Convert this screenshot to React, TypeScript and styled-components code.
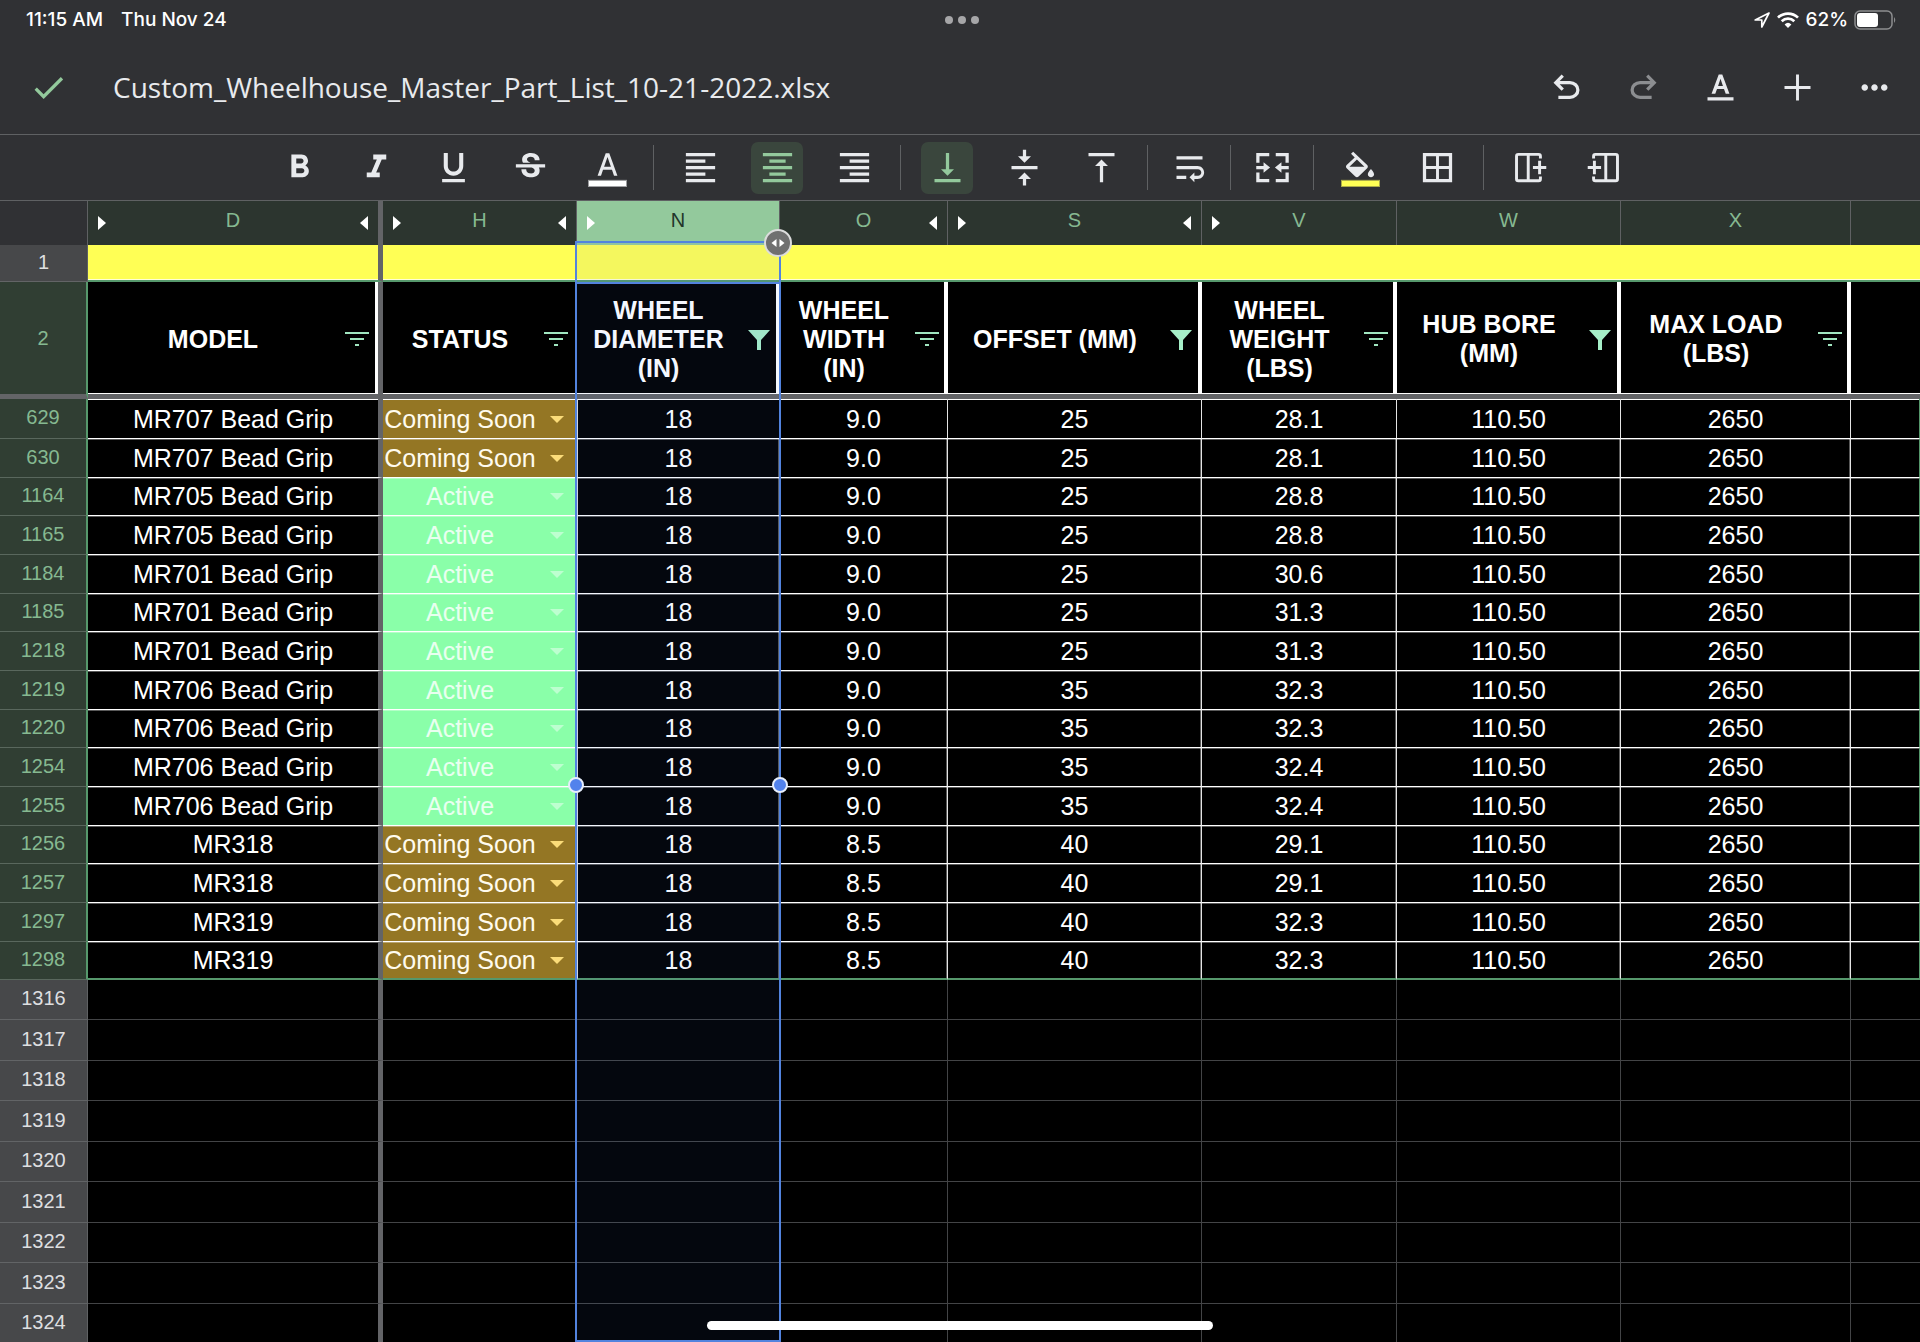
import React from 'react';
import styled, { createGlobalStyle, css } from 'styled-components';
import {
  MdCheck,
  MdFormatAlignCenter,
  MdFormatAlignLeft,
  MdFormatAlignRight,
  MdFormatBold,
  MdFormatItalic,
  MdFormatUnderlined,
  MdMoreHoriz,
  MdStrikethroughS,
  MdVerticalAlignBottom,
  MdVerticalAlignCenter,
  MdVerticalAlignTop,
  MdWrapText,
} from 'react-icons/md';

const color = {
  chrome: '#303134',
  chromeLine: '#5f6163',
  icon: '#e8eaed',
  accent: '#93c99c',
  accentBg: '#3a463d',
  headerBg: '#2c352f',
  labelBg: '#47484a',
  filteredBg: '#303e33',
  filteredText: '#86b991',
  range: '#56986c',
  freeze: '#636467',
  yellow: '#ffff55',
  selection: '#5283de',
  grid: '#434446',
};

const GlobalStyle = createGlobalStyle`
  *, *::before, *::after { box-sizing: border-box; }
  body { margin: 0; background: #000; }
  button, select { font: inherit; color: inherit; }
`;

const Page = styled.div`
  display: flex;
  flex-direction: column;
  height: 100vh;
  overflow: hidden;
  position: relative;
  background: #000;
  color: #fff;
  font-family: 'Liberation Sans', Arial, sans-serif;
`;

/* ---------- system status bar ---------- */

const StatusBar = styled.header`
  flex: none;
  display: grid;
  grid-template-columns: 1fr auto 1fr;
  align-items: center;
  height: 40px;
  padding: 0 22px 0 26px;
  background: ${color.chrome};
  font-family: Inter, sans-serif;
  font-size: 19px;
  line-height: 20px;
  font-weight: 500;
`;

const Clock = styled.div`
  display: flex;
  gap: 18px;
`;

const Multitask = styled.button`
  display: flex;
  gap: 5px;
  padding: 0;
  border: 0;
  background: none;
`;

const Dot = styled.span`
  width: 8px;
  height: 8px;
  border-radius: 50%;
  background: #a6a6a8;
`;

const Indicators = styled.div`
  display: flex;
  justify-content: flex-end;
  align-items: center;
  gap: 6px;
`;

/* ---------- title bar ---------- */

const TitleBar = styled.div`
  flex: none;
  display: flex;
  align-items: center;
  height: 94px;
  padding: 0 20px 0 22px;
  background: ${color.chrome};
`;

const FileName = styled.h1`
  flex: 1;
  margin: 0 0 0 39px;
  font-family: 'Open Sans', sans-serif;
  font-size: 28px;
  line-height: 36px;
  font-weight: 400;
  color: ${color.icon};
  white-space: nowrap;
`;

const Actions = styled.div`
  display: flex;
  gap: 25px;
`;

const IconButton = styled.button<{ $active?: boolean; $dim?: boolean; $accent?: boolean }>`
  display: grid;
  place-items: center;
  width: 52px;
  height: 52px;
  padding: 0;
  border: 0;
  border-radius: 7px;
  background: ${p => (p.$active ? color.accentBg : 'none')};
  color: ${p => (p.$active || p.$accent ? color.accent : color.icon)};
  opacity: ${p => (p.$dim ? 0.5 : 1)};
  svg {
    width: 39px;
    height: 39px;
  }
`;

/* ---------- formatting toolbar ---------- */

const Toolbar = styled.div`
  flex: none;
  display: flex;
  justify-content: center;
  align-items: center;
  gap: 20px;
  height: 67px;
  padding-right: 18px;
  background: ${color.chrome};
  border-top: 1px solid ${color.chromeLine};
  border-bottom: 1px solid ${color.chromeLine};
`;

const ToolGroup = styled.div<{ $tight?: boolean; $single?: boolean }>`
  display: flex;
  gap: ${p => (p.$tight ? 21 : 25)}px;
  margin: 0 ${p => (p.$single ? -5 : 0)}px;
`;

const Separator = styled.span`
  width: 1px;
  height: 45px;
  background: ${color.chromeLine};
`;

/* ---------- sheet ---------- */

const SheetArea = styled.main`
  flex: 1;
  min-height: 0;
  overflow: hidden;
  position: relative;
`;

const Sheet = styled.table`
  width: 100%;
  table-layout: fixed;
  border-collapse: separate;
  border-spacing: 0;
  font-size: 25px;
  line-height: 29px;
  text-align: center;

  th, td { padding: 0; }
`;

const Col = styled.col<{ $w?: number }>`
  width: ${p => (p.$w ? `${p.$w}px` : 'auto')};
`;

const freezeEdge = css`
  border-right: 5px solid ${color.freeze};
`;

const Corner = styled.td`
  height: 44px;
  background: ${color.chrome};
  border-right: 1px solid ${color.chromeLine};
`;

const ColumnHeader = styled.th<{ $selected?: boolean; $frozen?: boolean; $last?: boolean }>`
  background: ${p => (p.$selected ? color.accent : color.headerBg)};
  color: ${p => (p.$selected ? '#22352a' : color.filteredText)};
  border-right: ${p => (p.$last ? 0 : 1)}px solid ${color.chromeLine};
  font-size: 20px;
  line-height: 24px;
  font-weight: 400;
  ${p => p.$frozen && freezeEdge}
`;

const ColumnHeaderRow = styled.div`
  display: grid;
  grid-template-columns: 8px 1fr 8px;
  align-items: center;
  padding: 0 10px;
`;

const Letter = styled.span`
  grid-column: 2;
  padding-bottom: 6px;
`;

const HiddenToggle = styled.button<{ $side: 'left' | 'right' }>`
  grid-column: ${p => (p.$side === 'left' ? 1 : 3)};
  grid-row: 1;
  width: 8px;
  height: 14px;
  padding: 0;
  border: 0;
  background: #fff;
  clip-path: ${p =>
    p.$side === 'left'
      ? 'polygon(0 0, 100% 50%, 0 100%)'
      : 'polygon(100% 0, 0 50%, 100% 100%)'};
`;

const RowLabel = styled.th<{ $filtered?: boolean; $freezeBelow?: boolean }>`
  background: ${p => (p.$filtered ? color.filteredBg : color.labelBg)};
  color: ${p => (p.$filtered ? color.filteredText : '#dedfe0')};
  border-right: ${p =>
    p.$filtered ? `2px solid ${color.range}` : `1px solid ${color.chromeLine}`};
  border-bottom: 1px solid ${p => (p.$filtered ? '#59675d' : '#626466')};
  font-size: 20px;
  line-height: 24px;
  font-weight: 400;
  && {
    padding-bottom: 3px;
  }
  ${p => p.$freezeBelow && css`
    border-bottom: 5px solid ${color.freeze};
    && { padding-bottom: 0; }
  `}
`;

const BannerRow = styled.tr`
  height: 37px;
`;

const BannerCell = styled.td<{ $frozen?: boolean }>`
  background: ${color.yellow};
  border-bottom: 2px solid ${color.range};
  box-shadow: inset 0 -1px #ffffd6;
  ${p => p.$frozen && freezeEdge}
`;

const TitleRow = styled.tr`
  height: 117px;
`;

const TitleCell = styled.th<{ $frozen?: boolean; $edge: number }>`
  font-weight: 700;
  border-bottom: 5px solid ${color.freeze};
  box-shadow: inset 0 -1px #fff, inset -${p => p.$edge}px 0 #fff;
  && {
    padding-top: 2px;
  }
  ${p => p.$frozen && freezeEdge}
`;

const TitleContent = styled.div`
  display: flex;
  align-items: center;
`;

const TitleText = styled.span`
  flex: 1;
  padding-left: 2px;
  white-space: pre-line;
`;

const FilterButton = styled.button`
  flex: none;
  display: grid;
  place-items: center;
  width: 42px;
  height: 42px;
  padding: 0;
  border: 0;
  background: none;
`;

const FilteredBody = styled.tbody`
  tr { height: 39px; }
  tr:nth-child(3n) { height: 38px; }
  tr:first-child { height: 40px; }
  tr:first-child td { box-shadow: inset 0 1px #fff; padding-top: 1px; }
  tr:last-child td { border-bottom: 2px solid ${color.range}; }
`;

/* Cell rules are one solid pixel with a fainter one beside it. */
const softTop = 'inset 0 1px rgba(255, 255, 255, 0.35)';
const softRight = 'inset -1px 0 rgba(255, 255, 255, 0.35)';

const DataCell = styled.td<{ $frozen?: boolean; $first?: boolean; $tail?: boolean }>`
  border-right: 1px solid ${p => (p.$tail ? color.range : '#e4e4e4')};
  border-bottom: 1px solid #fff;
  border-left: ${p => (p.$first ? '1px solid #dcdcdc' : 0)};
  box-shadow: ${p => (p.$frozen || p.$tail ? softTop : `${softTop}, ${softRight}`)};
  ${p => p.$frozen && freezeEdge}
`;

const StatusCell = styled.td<{ $active: boolean }>`
  background: ${p => (p.$active ? '#8affa9' : '#947624')};
  color: ${p => (p.$active ? '#e9fff0' : '#fffbee')};
  border-bottom: 1px solid #fff;
  box-shadow: ${softTop};
`;

const StatusField = styled.label`
  display: block;
  position: relative;
  svg {
    position: absolute;
    right: 13px;
    top: 11px;
    pointer-events: none;
  }
`;

const StatusSelect = styled.select`
  display: block;
  appearance: none;
  width: 100%;
  height: 29px;
  padding: 0 40px 0 0;
  border: 0;
  background: none;
  text-align: center;
  text-align-last: center;
`;

const EmptyBody = styled.tbody`
  tr { height: 40px; }
  tr:nth-child(even) { height: 41px; }
`;

const EmptyCell = styled.td<{ $frozen?: boolean; $last?: boolean }>`
  border-right: ${p => (p.$last ? 0 : 1)}px solid ${color.grid};
  border-bottom: 1px solid ${color.grid};
  ${p => p.$frozen && freezeEdge}
`;

/* Outline drawn over the selected column, with its drag handles. */

const Selection = styled.div`
  position: absolute;
  left: 575px;
  top: 40px;
  bottom: 0;
  width: 206px;
  border: 2px solid ${color.selection};
  background: rgba(66, 120, 240, 0.06);
  pointer-events: none;
`;

const SelectionSplit = styled.div`
  position: absolute;
  left: 0;
  right: 0;
  top: 39px;
  height: 2px;
  background: ${color.selection};
`;

const Handle = styled.span<{ $side: 'left' | 'right' }>`
  position: absolute;
  top: 534px;
  ${p => p.$side}: -9px;
  width: 16px;
  height: 16px;
  border: 2px solid #e6eefc;
  border-radius: 50%;
  background: #5282ec;
`;

const ResizeHandle = styled.span`
  position: absolute;
  top: -14px;
  right: -13px;
  display: grid;
  place-items: center;
  width: 28px;
  height: 28px;
  border: 2px solid #dcdcdc;
  border-radius: 50%;
  background: #707070;
`;

const HomeIndicator = styled.div`
  position: absolute;
  left: 50%;
  bottom: 12px;
  width: 506px;
  height: 9px;
  border-radius: 5px;
  background: #fff;
  transform: translateX(-50%);
`;

/* ---------- drawings ---------- */

const Icon = ({ children }: { children: React.ReactNode }) => (
  <svg viewBox="0 0 24 24" fill="currentColor" aria-hidden="true">{children}</svg>
);

const UndoIcon = () => (
  <Icon>
    <path d="M7 19v-2h7.1q1.575 0 2.738-1T18 13.5t-1.163-2.5T14.1 10H7.8l2.6 2.6L9 14 4 9l5-5 1.4 1.4L7.8 8h6.3q2.425 0 4.163 1.575T20 13.5t-1.738 3.925T14.1 19z" />
  </Icon>
);

const RedoIcon = () => (
  <Icon>
    <path d="M17 19v-2H9.9q-1.575 0-2.738-1T6 13.5t1.163-2.5T9.9 10h6.3l-2.6 2.6L15 14l5-5-5-5-1.4 1.4L16.2 8H9.9q-2.425 0-4.163 1.575T4 13.5t1.738 3.925T9.9 19z" />
  </Icon>
);

const TextStyleIcon = () => (
  <Icon>
    <path d="M4 18h16v2H4zM6.5 15.800 10.900 4h2.200l4.400 11.800h-2.300l-1.050-2.900H9.850L8.800 15.800zM10.500 11h3L12 6.600z" />
  </Icon>
);

const AddIcon = () => (
  <Icon>
    <path d="M11.100 4h1.800v7.100H20v1.800h-7.100V20h-1.800v-7.100H4v-1.800h7.100z" />
  </Icon>
);

const TextColorIcon = () => (
  <Icon>
    <path d="M5.900 17 10.900 3.200h2.200L18.100 17h-2.100l-1.250-3.600h-5.500L8 17zM9.900 11.600h4.200L12 5.500z" />
    <rect x="0.300" y="19.900" width="23.400" height="3.900" fill="#fff" stroke="#9b9c9e" strokeWidth="0.600" />
  </Icon>
);

const FillColorIcon = () => (
  <Icon>
    <path
      transform="translate(0.200 2.300) scale(0.960 0.920)"
      d="M16.560 8.940 7.620 0 6.210 1.410l2.380 2.380-5.150 5.150c-.59.59-.59 1.540 0 2.120l5.500 5.500c.29.29.68.44 1.060.44s.77-.15 1.060-.44l5.500-5.500c.59-.58.59-1.530 0-2.120zM5.210 10 10 5.210 14.790 10zM19 11.500s-2 2.170-2 3.500c0 1.100.9 2 2 2s2-.9 2-2c0-1.330-2-3.500-2-3.500z"
    />
    <rect x="0.300" y="19.900" width="23.400" height="3.900" fill="#ffff55" stroke="#a9a94a" strokeWidth="0.600" />
  </Icon>
);

const MergeIcon = () => (
  <Icon>
    <path d="M2 3h8v2H4v4H2zM14 3h8v6h-2V5h-6zM2 15h2v4h6v2H2zM20 15h2v6h-8v-2h6zM2 11h4.500V8.700l4 3.300-4 3.300V13H2zM22 11h-4.500V8.700l-4 3.300 4 3.300V13H22z" />
  </Icon>
);

const BordersIcon = () => (
  <Icon>
    <path d="M3 3v18h18V3zm8.100 16H5v-6.100h6.100zm0-7.900H5V5h6.100zM19 19h-6.100v-6.100H19zm0-7.900h-6.100V5H19z" />
  </Icon>
);

const InsertColumnPath = () => (
  <path
    fill="none"
    stroke="currentColor"
    strokeWidth="1.800"
    d="M18.100 6.500V5Q18.100 3.900 17 3.900H4.500Q3.400 3.900 3.400 5V19Q3.400 20.100 4.500 20.100H17Q18.100 20.100 18.100 19V17.500M10.600 4V20M17.600 7.900V16.100M13.500 12H21.700"
  />
);

const InsertRightIcon = () => <Icon><InsertColumnPath /></Icon>;
const InsertLeftIcon = () => (
  <Icon><g transform="matrix(-1 0 0 1 24 0)"><InsertColumnPath /></g></Icon>
);

const FilterLines = () => (
  <svg width="24" height="14" viewBox="0 0 24 14" fill="#a0e6c0" aria-hidden="true">
    <path d="M0 0h24v2H0zM5 6h14v2H5zM10 12h4v2h-4z" />
  </svg>
);

const FilterFunnel = () => (
  <svg width="22" height="22" viewBox="0 0 22 22" fill="#a6efc8" aria-hidden="true">
    <path d="M0 2h22l-9 10v10H9V12z" />
  </svg>
);

const Caret = ({ fill }: { fill: string }) => (
  <svg width="14" height="7" viewBox="0 0 14 7" fill={fill} aria-hidden="true">
    <path d="M0 0h14L7 7z" />
  </svg>
);

const LocationIcon = () => (
  <svg width="18" height="18" viewBox="0 0 18 18" fill="none" stroke="#fff" strokeWidth="1.700" strokeLinejoin="round" aria-hidden="true">
    <path d="M16 2 2.200 9h6.600v7z" />
  </svg>
);

const WifiIcon = () => (
  <svg width="22" height="16" viewBox="0 0 22 16" fill="none" stroke="#fff" strokeWidth="2.700" aria-hidden="true">
    <path d="M1 5.600a14.400 14.400 0 0 1 20 0M4.700 9.200a9.200 9.200 0 0 1 12.600 0" />
    <path d="M11 16 7.600 12.400a5 5 0 0 1 6.800 0z" fill="#fff" stroke="none" />
  </svg>
);

const BatteryIcon = () => (
  <svg width="44" height="20" viewBox="0 0 44 20" fill="none" aria-hidden="true">
    <rect x="1" y="1" width="37" height="18" rx="5" stroke="#8c8d8f" strokeWidth="1.500" />
    <rect x="3" y="3" width="21" height="14" rx="3" fill="#fff" />
    <path d="M40 7q2.500 3 0 6z" fill="#8c8d8f" />
  </svg>
);

const ResizeArrows = () => (
  <svg width="14" height="8" viewBox="0 0 14 8" fill="#fff" aria-hidden="true">
    <path d="M5.500 0v8L.5 4zM8.500 0v8l5-4z" />
  </svg>
);

/* ---------- data ---------- */

type Column = {
  letter: string;
  width?: number;
  title: string;
  edge: number;
  filter?: 'open' | 'set';
  hiddenLeft?: boolean;
  hiddenRight?: boolean;
};

const columns: Column[] = [
  { letter: 'D', width: 295, title: 'MODEL', edge: 3, filter: 'open', hiddenLeft: true, hiddenRight: true },
  { letter: 'H', width: 194, title: 'STATUS', edge: 2, filter: 'open', hiddenLeft: true, hiddenRight: true },
  { letter: 'N', width: 203, title: 'WHEEL\nDIAMETER\n(IN)', edge: 4, filter: 'set', hiddenLeft: true },
  { letter: 'O', width: 168, title: 'WHEEL\nWIDTH\n(IN)', edge: 4, filter: 'open', hiddenRight: true },
  { letter: 'S', width: 254, title: 'OFFSET (MM)', edge: 4, filter: 'set', hiddenLeft: true, hiddenRight: true },
  { letter: 'V', width: 195, title: 'WHEEL\nWEIGHT\n(LBS)', edge: 4, filter: 'open', hiddenLeft: true },
  { letter: 'W', width: 224, title: 'HUB BORE\n(MM)', edge: 4, filter: 'set' },
  { letter: 'X', width: 230, title: 'MAX LOAD\n(LBS)', edge: 4, filter: 'open' },
  { letter: '', title: '', edge: 0 },
];

type Part = [row: number, model: string, status: string, width: string, offset: string, weight: string];

const SOON = 'Coming Soon';
const ACTIVE = 'Active';

const parts: Part[] = [
  [629, 'MR707 Bead Grip', SOON, '9.0', '25', '28.1'],
  [630, 'MR707 Bead Grip', SOON, '9.0', '25', '28.1'],
  [1164, 'MR705 Bead Grip', ACTIVE, '9.0', '25', '28.8'],
  [1165, 'MR705 Bead Grip', ACTIVE, '9.0', '25', '28.8'],
  [1184, 'MR701 Bead Grip', ACTIVE, '9.0', '25', '30.6'],
  [1185, 'MR701 Bead Grip', ACTIVE, '9.0', '25', '31.3'],
  [1218, 'MR701 Bead Grip', ACTIVE, '9.0', '25', '31.3'],
  [1219, 'MR706 Bead Grip', ACTIVE, '9.0', '35', '32.3'],
  [1220, 'MR706 Bead Grip', ACTIVE, '9.0', '35', '32.3'],
  [1254, 'MR706 Bead Grip', ACTIVE, '9.0', '35', '32.4'],
  [1255, 'MR706 Bead Grip', ACTIVE, '9.0', '35', '32.4'],
  [1256, 'MR318', SOON, '8.5', '40', '29.1'],
  [1257, 'MR318', SOON, '8.5', '40', '29.1'],
  [1297, 'MR319', SOON, '8.5', '40', '32.3'],
  [1298, 'MR319', SOON, '8.5', '40', '32.3'],
];

const emptyRows = [1316, 1317, 1318, 1319, 1320, 1321, 1322, 1323, 1324];

type Tool = { label: string; icon: React.ReactNode; active?: boolean };

const toolGroups: Tool[][] = [
  [
    { label: 'Bold', icon: <MdFormatBold /> },
    { label: 'Italic', icon: <MdFormatItalic /> },
    { label: 'Underline', icon: <MdFormatUnderlined /> },
    { label: 'Strikethrough', icon: <MdStrikethroughS /> },
    { label: 'Text color', icon: <TextColorIcon /> },
  ],
  [
    { label: 'Align left', icon: <MdFormatAlignLeft /> },
    { label: 'Align center', icon: <MdFormatAlignCenter />, active: true },
    { label: 'Align right', icon: <MdFormatAlignRight /> },
  ],
  [
    { label: 'Align bottom', icon: <MdVerticalAlignBottom />, active: true },
    { label: 'Align middle', icon: <MdVerticalAlignCenter /> },
    { label: 'Align top', icon: <MdVerticalAlignTop /> },
  ],
  [{ label: 'Wrap text', icon: <MdWrapText /> }],
  [{ label: 'Merge cells', icon: <MergeIcon /> }],
  [
    { label: 'Fill color', icon: <FillColorIcon /> },
    { label: 'Borders', icon: <BordersIcon /> },
  ],
  [
    { label: 'Insert column right', icon: <InsertRightIcon /> },
    { label: 'Insert column left', icon: <InsertLeftIcon /> },
  ],
];

const PartRow = ({ part }: { part: Part }) => {
  const [row, model, status, width, offset, weight] = part;
  const active = status === ACTIVE;
  return (
    <tr>
      <RowLabel scope="row" $filtered>{row}</RowLabel>
      <DataCell $frozen>{model}</DataCell>
      <StatusCell $active={active}>
        <StatusField>
          <StatusSelect aria-label={`Status, row ${row}`} defaultValue={status}>
            <option>{ACTIVE}</option>
            <option>{SOON}</option>
          </StatusSelect>
          <Caret fill={active ? '#bdffd0' : '#fbdc79'} />
        </StatusField>
      </StatusCell>
      <DataCell $first>18</DataCell>
      <DataCell>{width}</DataCell>
      <DataCell>{offset}</DataCell>
      <DataCell>{weight}</DataCell>
      <DataCell>110.50</DataCell>
      <DataCell>2650</DataCell>
      <DataCell $tail />
    </tr>
  );
};

export default function App() {
  return (
    <Page>
      <GlobalStyle />

      <StatusBar>
        <Clock>
          <span>11:15 AM</span>
          <span>Thu Nov 24</span>
        </Clock>
        <Multitask aria-label="Multitasking">
          <Dot /><Dot /><Dot />
        </Multitask>
        <Indicators>
          <LocationIcon />
          <WifiIcon />
          <span>62%</span>
          <BatteryIcon />
        </Indicators>
      </StatusBar>

      <TitleBar>
        <IconButton aria-label="Done" $accent><MdCheck /></IconButton>
        <FileName>Custom_Wheelhouse_Master_Part_List_10-21-2022.xlsx</FileName>
        <Actions>
          <IconButton aria-label="Undo"><UndoIcon /></IconButton>
          <IconButton aria-label="Redo" $dim><RedoIcon /></IconButton>
          <IconButton aria-label="Format"><TextStyleIcon /></IconButton>
          <IconButton aria-label="Insert"><AddIcon /></IconButton>
          <IconButton aria-label="More"><MdMoreHoriz /></IconButton>
        </Actions>
      </TitleBar>

      <Toolbar role="toolbar" aria-label="Formatting">
        {toolGroups.map((group, i) => (
          <React.Fragment key={i}>
            {i > 0 && <Separator />}
            <ToolGroup $tight={i === toolGroups.length - 1} $single={group.length === 1}>
              {group.map(tool => (
                <IconButton key={tool.label} aria-label={tool.label} $active={tool.active}>
                  {tool.icon}
                </IconButton>
              ))}
            </ToolGroup>
          </React.Fragment>
        ))}
      </Toolbar>

      <SheetArea>
        <Sheet>
          <colgroup>
            <Col $w={88} />
            {columns.map((c, i) => <Col key={i} $w={c.width} />)}
          </colgroup>
          <thead>
            <tr>
              <Corner />
              {columns.map((c, i) => (
                <ColumnHeader key={i} scope="col" $selected={c.letter === 'N'} $frozen={i === 0} $last={i === columns.length - 1}>
                  <ColumnHeaderRow>
                    {c.hiddenLeft && <HiddenToggle $side="left" aria-label={`Show columns before ${c.letter}`} />}
                    <Letter>{c.letter}</Letter>
                    {c.hiddenRight && <HiddenToggle $side="right" aria-label={`Show columns after ${c.letter}`} />}
                  </ColumnHeaderRow>
                </ColumnHeader>
              ))}
            </tr>
          </thead>
          <tbody>
            <BannerRow>
              <RowLabel scope="row">1</RowLabel>
              {columns.map((_, i) => <BannerCell key={i} $frozen={i === 0} />)}
            </BannerRow>
            <TitleRow>
              <RowLabel scope="row" $filtered $freezeBelow>2</RowLabel>
              {columns.map((c, i) => (
                <TitleCell key={i} scope="col" $frozen={i === 0} $edge={c.edge}>
                  {c.title && (
                    <TitleContent>
                      <TitleText>{c.title}</TitleText>
                      <FilterButton aria-label={`Filter ${c.letter}`}>
                        {c.filter === 'set' ? <FilterFunnel /> : <FilterLines />}
                      </FilterButton>
                    </TitleContent>
                  )}
                </TitleCell>
              ))}
            </TitleRow>
          </tbody>
          <FilteredBody>
            {parts.map(p => <PartRow key={p[0]} part={p} />)}
          </FilteredBody>
          <EmptyBody>
            {emptyRows.map(row => (
              <tr key={row}>
                <RowLabel scope="row">{row}</RowLabel>
                {columns.map((_, i) => (
                  <EmptyCell key={i} $frozen={i === 0} $last={i === columns.length - 1} />
                ))}
              </tr>
            ))}
          </EmptyBody>
        </Sheet>
        <Selection>
          <SelectionSplit />
          <Handle $side="left" />
          <Handle $side="right" />
          <ResizeHandle><ResizeArrows /></ResizeHandle>
        </Selection>
      </SheetArea>

      <HomeIndicator />
    </Page>
  );
}
